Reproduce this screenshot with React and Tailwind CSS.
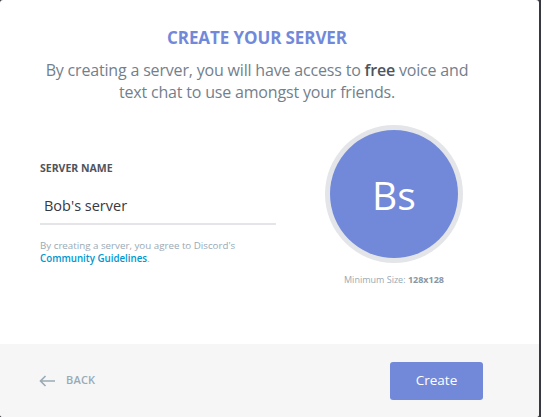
const ArrowLeft = () => (
  <svg width="17" height="12" viewBox="0 0 17 12" fill="none">
    <path d="M16 6H1.5M6.5 1L1.5 6l5 5" stroke="#99aab5" strokeWidth="1.6" />
  </svg>
);

const App = () => {
  return (
    <div className="w-[541px] h-[417px] bg-[#36393f] overflow-hidden" style={{ fontFamily: '"Open Sans", sans-serif' }}>
      <div className="w-[539px] h-[417px] bg-white rounded-[3px] flex flex-col overflow-hidden">
        {/* Body */}
        <div className="flex-1 flex flex-col">
          <div className="flex flex-col items-center pr-[25px]">
            <h1 className="mt-[27px] text-[17px] leading-[22px] font-bold text-[#7289da] uppercase tracking-[-0.1px]">
              Create your server
            </h1>
            <p className="mt-[10px] text-[16px] leading-[22px] text-[#737f8d] text-center tracking-[-0.18px]">
              By creating a server, you will have access to <strong className="font-semibold text-[#4f545c]">free</strong> voice and
              <br />
              text chat to use amongst your friends.
            </p>
          </div>

          <div className="w-full flex mt-[22px] pl-[40px] pr-[51px]">
            {/* Left */}
            <div className="w-[236px] pt-[37px]">
              <div className="text-[10.5px] leading-[12px] font-bold text-[#4f545c] uppercase">Server name</div>
              <div className="mt-[15px] h-[36px] border-b-2 border-[#e3e5e8] flex items-center">
                <span className="pl-[4px] text-[14.5px] text-[#36393f]">Bob's server</span>
              </div>
              <p className="mt-[14px] text-[9.75px] leading-[13px] text-[#99aab5]">
                By creating a server, you agree to Discord's
                <br />
                <span className="text-[#0096cf] font-semibold">Community Guidelines</span>.
              </p>
            </div>

            {/* Right */}
            <div className="flex-1 flex flex-col items-center pl-[24px]">
              <div className="w-[138px] h-[138px] rounded-full bg-[#e3e5e8] flex items-center justify-center">
                <div className="w-[128px] h-[128px] rounded-full bg-[#7289da] flex items-center justify-center">
                  <span className="text-[39px] text-white leading-none">Bs</span>
                </div>
              </div>
              <div className="mt-[11px] text-[9px] leading-[12px] text-[#99aab5]">
                Minimum Size: <span className="font-bold text-[#8a96a3]">128x128</span>
              </div>
            </div>
          </div>
        </div>

        {/* Footer */}
        <div className="h-[73px] bg-[#f6f6f7] flex items-center justify-between pl-[39px] pr-[56px]">
          <div className="flex items-center gap-[10px]">
            <ArrowLeft />
            <span className="text-[11px] font-semibold text-[#99aab5] uppercase tracking-[0.2px]">Back</span>
          </div>
          <button className="w-[93px] h-[38px] rounded-[3px] bg-[#7289da] text-white text-[13.5px] font-medium">
            Create
          </button>
        </div>
      </div>
    </div>
  );
};

export default App;
